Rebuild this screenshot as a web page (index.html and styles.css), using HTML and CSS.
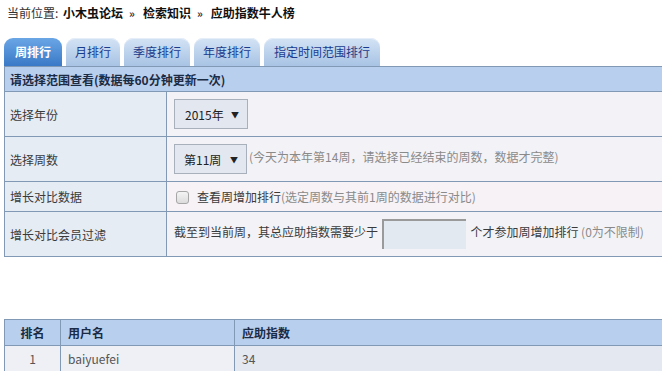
FILE: index.html
```html
<!DOCTYPE html>
<html lang="zh">
<head>
<meta charset="utf-8">
<link rel="stylesheet" href="styles.css">
</head>
<body>
<div class="page">
  <div class="crumb">当前位置: <b>小木虫论坛</b><b class="sep">»</b><b>检索知识</b><b class="sep">»</b><b>应助指数牛人榜</b></div>
  <div class="tabs">
    <span class="tab active">周排行</span>
    <span class="tab">月排行</span>
    <span class="tab">季度排行</span>
    <span class="tab">年度排行</span>
    <span class="tab">指定时间范围排行</span>
  </div>
  <table class="form">
    <tr class="head"><td colspan="2">请选择范围查看(数据每60分钟更新一次)</td></tr>
    <tr class="tall">
      <td class="lbl">选择年份</td>
      <td class="val"><span class="sel sel-year">2015年<i>▼</i></span></td>
    </tr>
    <tr class="tall">
      <td class="lbl">选择周数</td>
      <td class="val"><span class="sel sel-week">第11周<i>▼</i></span><span class="hint">(今天为本年第14周，请选择已经结束的周数，数据才完整)</span></td>
    </tr>
    <tr class="short">
      <td class="lbl">增长对比数据</td>
      <td class="val pink"><span class="chk"></span>查看周增加排行<span class="hint">(选定周数与其前1周的数据进行对比)</span></td>
    </tr>
    <tr class="tall">
      <td class="lbl">增长对比会员过滤</td>
      <td class="val">截至到当前周，其总应助指数需要少于 <span class="box"></span> 个才参加周增加排行 <span class="hint">(0为不限制)</span></td>
    </tr>
  </table>
  <table class="rank">
    <tr class="rhead"><td class="c1">排名</td><td class="c2">用户名</td><td class="c3">应助指数</td></tr>
    <tr class="rrow"><td class="c1">1</td><td class="c2">baiyuefei</td><td class="c3 alt">34</td></tr>
  </table>
</div>
</body>
</html>
```
FILE: styles.css
```css
html, body {
  margin: 0;
  padding: 0;
  background: #fff;
  overflow: hidden;
}
body {
  font-family: "Noto Sans CJK SC", "Noto Sans", sans-serif;
  font-size: 12px;
  color: #3a3a3a;
}
.page {
  padding: 0 0 0 4px;
  width: 700px;
}
.crumb {
  height: 26px;
  line-height: 26px;
  padding-left: 3px;
  color: #333;
  white-space: nowrap;
}
.crumb b {
  color: #111;
  margin-left: 2px;
}
.crumb .sep {
  display: inline-block;
  font-size: 11px;
  color: #333;
  margin: 0 6px;
}
.tabs {
  margin-top: 12px;
  display: flex;
  gap: 4px;
  height: 28px;
  align-items: flex-end;
}
.tab {
  height: 28px;
  line-height: 28px;
  padding: 0 9px;
  border-radius: 9px 9px 0 0;
  background: linear-gradient(#d3e3f5, #a8c3e4);
  color: #1a3a8c;
  box-shadow: inset 0 1px 0 #e6eef9;
  white-space: nowrap;
}
.tab:last-child {
  padding: 0 10px;
}
.tab.active {
  background: linear-gradient(#6aa6e6, #3a79c6);
  color: #fff;
  font-weight: bold;
  padding: 0 11px;
  box-shadow: none;
}
table {
  border-collapse: collapse;
  width: 680px;
}
td {
  border: 1px solid #8199b4;
  padding: 0;
  white-space: nowrap;
}
.form .head td {
  background: #b9cfee;
  height: 24px;
  font-weight: bold;
  padding-left: 5px;
  color: #1b2b44;
}
.form .lbl {
  width: 156px;
  padding-left: 5px;
  background: #e6ecf4;
}
.form .val {
  background: #f3f3f7;
  padding-left: 7px;
}
.form .val.pink {
  background: #f6f2f6;
}
.form .tall td {
  height: 44px;
}
.form .short td {
  height: 29px;
}
.sel {
  display: inline-flex;
  align-items: center;
  box-sizing: border-box;
  height: 30px;
  border: 1px solid #a7b0bb;
  background: #e3e8f0;
  padding-left: 10px;
  color: #222;
  vertical-align: middle;
  white-space: nowrap;
}
.sel i {
  font-style: normal;
  font-size: 8px;
  margin-left: auto;
  margin-right: 8px;
}
.sel-year {
  width: 74px;
}
.sel-week {
  width: 73px;
  padding-left: 9px;
}
.hint {
  color: #8a8a8a;
}
.sel + .hint {
  margin-left: 2px;
}
.chk {
  display: inline-block;
  width: 11px;
  height: 11px;
  border: 1px solid #a7a7a7;
  border-radius: 3px;
  background: linear-gradient(#f4f4f4, #dcdcdc);
  vertical-align: -2px;
  margin: 0 8px 0 2px;
}
.box {
  display: inline-block;
  box-sizing: border-box;
  width: 84px;
  height: 30px;
  background: #e3e9f1;
  border-top: 2px solid #9a9a9a;
  border-left: 2px solid #9a9a9a;
  vertical-align: middle;
  margin: 0 2px 0 1px;
}
.rank {
  margin-top: 62px;
}
.rank td {
  height: 25px;
}
.rank .rhead td {
  background: #b9cfee;
  font-weight: bold;
  color: #1b2b44;
}
.rank .c1 {
  width: 55px;
  text-align: center;
}
.rank .c2 {
  width: 166px;
  padding-left: 7px;
}
.rank .c3 {
  padding-left: 7px;
}
.rank .rrow td {
  background: #eef0f6;
  color: #555;
}
.rank .rrow .alt {
  background: #e4e8f0;
}
```
